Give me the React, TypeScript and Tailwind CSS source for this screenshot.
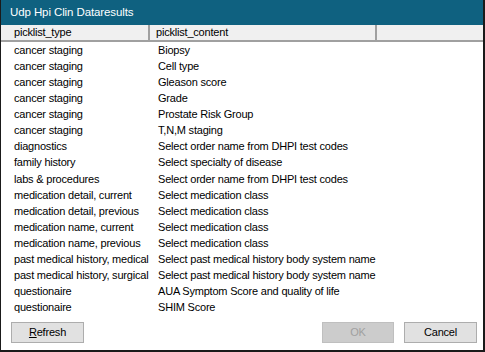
const rows: [string, string][] = [
  ['cancer staging', 'Biopsy'],
  ['cancer staging', 'Cell type'],
  ['cancer staging', 'Gleason score'],
  ['cancer staging', 'Grade'],
  ['cancer staging', 'Prostate Risk Group'],
  ['cancer staging', 'T,N,M staging'],
  ['diagnostics', 'Select order name from DHPI test codes'],
  ['family history', 'Select specialty of disease'],
  ['labs & procedures', 'Select order name from DHPI test codes'],
  ['medication detail, current', 'Select medication class'],
  ['medication detail, previous', 'Select medication class'],
  ['medication name, current', 'Select medication class'],
  ['medication name, previous', 'Select medication class'],
  ['past medical history, medical', 'Select past medical history body system name'],
  ['past medical history, surgical', 'Select past medical history body system name'],
  ['questionaire', 'AUA Symptom Score and quality of life'],
  ['questionaire', 'SHIM Score'],
];

export default function App() {
  return (
    <div className="flex h-[352px] w-[485px] flex-col border-b-2 border-l border-r-2 border-[#1a1a1a] bg-white font-['Liberation_Sans',Arial,sans-serif] text-[11px] tracking-[-0.2px] text-black">
      <div className="flex h-[25px] shrink-0 items-center bg-[#0f6180] pl-[9px] text-[11.5px] tracking-[-0.1px] text-white">
        Udp Hpi Clin Dataresults
      </div>

      <div className="flex h-[17px] shrink-0 border-b-2 border-[#a0a0a0] bg-[#f0f0f0] pl-[5px] pr-[5px] leading-[15px]">
        <div className="w-[144px] border-r-2 border-[#a0a0a0] pl-[8px]">picklist_type</div>
        <div className="w-[227px] border-r-2 border-[#a0a0a0] pl-[6px]">picklist_content</div>
        <div className="flex-1" />
      </div>

      <div className="flex flex-col">
        {rows.map(([type, content], i) => (
          <div key={i} className="flex h-[16.1px] items-center whitespace-nowrap pl-[13px]">
            <div className="w-[144px] shrink-0">{type}</div>
            <div>{content}</div>
          </div>
        ))}
      </div>

      <div className="mt-auto flex items-center pb-[7px] pl-[10px] pr-[6px]">
        <button className="h-[21px] w-[73px] border border-[#adadad] bg-[#e1e1e1]">
          <span className="underline">R</span>efresh
        </button>
        <div className="flex-1" />
        <button disabled className="h-[21px] w-[72px] border border-[#bfbfbf] bg-[#cccccc] text-[#a0a0a0]">
          OK
        </button>
        <button className="ml-[10px] h-[21px] w-[73px] border border-[#adadad] bg-[#e1e1e1]">
          Cancel
        </button>
      </div>
    </div>
  );
}
